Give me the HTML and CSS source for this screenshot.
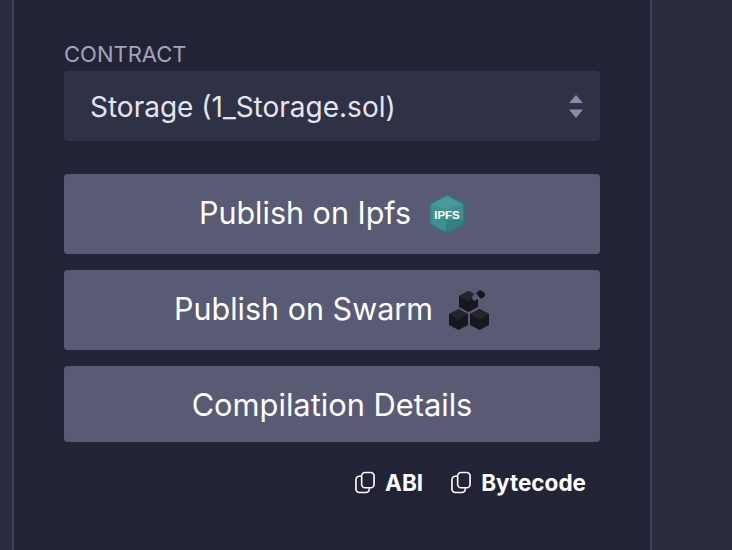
FILE: index.html
```
<!DOCTYPE html>
<html lang="en">
<head>
<meta charset="utf-8">
<title>Compile</title>
<link rel="stylesheet" href="styles.css">
</head>
<body>
<div class="frame">
  <main class="panel">
    <div class="label">CONTRACT</div>
    <div class="select">
      <span class="select-text">Storage (1_Storage.sol)</span>
      <svg class="arrows" width="14" height="23" viewBox="0 0 14 23"><path d="M7 0L14 8H0Z M0 14.500H14L7 23Z" fill="#8a8ca9"/></svg>
    </div>
    <div class="actions">
      <button class="btn tall"><span class="lift">Publish on Ipfs</span>
        <svg width="36" height="40" viewBox="0 0 36 40"><path d="M18 1L35 10V30L18 39L1 30V10Z" fill="#3f8f8e"/><path d="M1 10L18 1L35 10L18 15Z" fill="#4a9a98"/><path d="M18 30V39L35 30V26H18Z" fill="#367f80"/><path d="M18 1L35 10V30L18 39L1 30V10Z M18 30V39" fill="none" stroke="#2f7a7b" stroke-width="1.500"/><text x="18" y="25" text-anchor="middle" class="ipfs">IPFS</text></svg>
      </button>
      <button class="btn tall tight"><span class="lift">Publish on Swarm</span>
        <svg width="42" height="42" viewBox="0 0 42 42"><g fill="#17171f"><path d="M10.500 20L20 25V36L10.500 41L1 36V25Z"/><path d="M31.500 20L41 25V36L31.500 41L22 36V25Z"/><path d="M20.500 2L26 5L23 8L26 12L30 10V18L20.500 23L11 18V7Z"/><path d="M32 1L37 4V7L33 10L28 4Z"/></g><g fill="#25252e"><path d="M10.500 20L20 25L10.500 30.500L1 25Z"/><path d="M31.500 20L41 25L31.500 30.500L22 25Z"/><path d="M20.500 2L26 5L20.500 13L11 7Z"/></g></svg>
      </button>
      <button class="btn wide">Compilation Details</button>
    </div>
    <div class="links">
      <a class="link"><svg width="20" height="23" viewBox="0 0 21 23" fill="none" stroke="#fff" stroke-width="1.700"><rect x="7" y="1" width="13" height="16" rx="3.500"/><path d="M7 5H4.500a3.500 3.500 0 0 0-3.500 3.500v10a3.500 3.500 0 0 0 3.500 3.500h7a3.500 3.500 0 0 0 3.500-3.500v-1.500"/></svg>ABI</a>
      <a class="link"><svg width="20" height="23" viewBox="0 0 21 23" fill="none" stroke="#fff" stroke-width="1.700"><rect x="7" y="1" width="13" height="16" rx="3.500"/><path d="M7 5H4.500a3.500 3.500 0 0 0-3.500 3.500v10a3.500 3.500 0 0 0 3.500 3.500h7a3.500 3.500 0 0 0 3.500-3.500v-1.500"/></svg>Bytecode</a>
    </div>
  </main>
</div>
</body>
</html>
```
FILE: styles.css
```
* { box-sizing: border-box; }
html, body { margin: 0; height: 100%; }
body { background: #2a2c3f; font-family: Inter, "Liberation Sans", sans-serif; overflow: hidden; }
.frame { display: flex; height: 550px; padding-left: 12px; }
.panel {
  width: 640px;
  background: #222336;
  border-left: 2px solid #3f4157;
  border-right: 2px solid #3f4157;
  padding: 42px 50px 0;
}
.label { color: #a2a3bd; font-size: 22px; line-height: 24px; height: 29px; }
.select {
  height: 70px;
  background: #2f3146;
  border-radius: 4px;
  color: #e3e4f0;
  font-size: 28px;
  display: flex;
  align-items: center;
  justify-content: space-between;
  padding: 0 17px 0 26px;
}
.select-text { margin-top: 2px; }
.actions { display: flex; flex-direction: column; gap: 16px; margin-top: 33px; }
.btn {
  height: 76px;
  border: 0;
  border-radius: 4px;
  background: #595a74;
  color: #fff;
  font: 30.500px Inter, "Liberation Sans", sans-serif;
  display: flex;
  align-items: center;
  justify-content: center;
  gap: 18px;
  padding: 0;
}
.btn.wide { font-size: 30.800px; }
.btn.tall { height: 80px; }
.btn.tight { gap: 15px; }
.lift { margin-top: -3px; }
.ipfs { font: 700 11.500px "Liberation Sans", sans-serif; fill: #fff; }
.links { display: flex; justify-content: flex-end; gap: 28px; margin-top: 29px; padding-right: 14px; }
.link { display: flex; align-items: center; gap: 10px; color: #fff; font-size: 22.500px; font-weight: 700; line-height: 22px; }
```
